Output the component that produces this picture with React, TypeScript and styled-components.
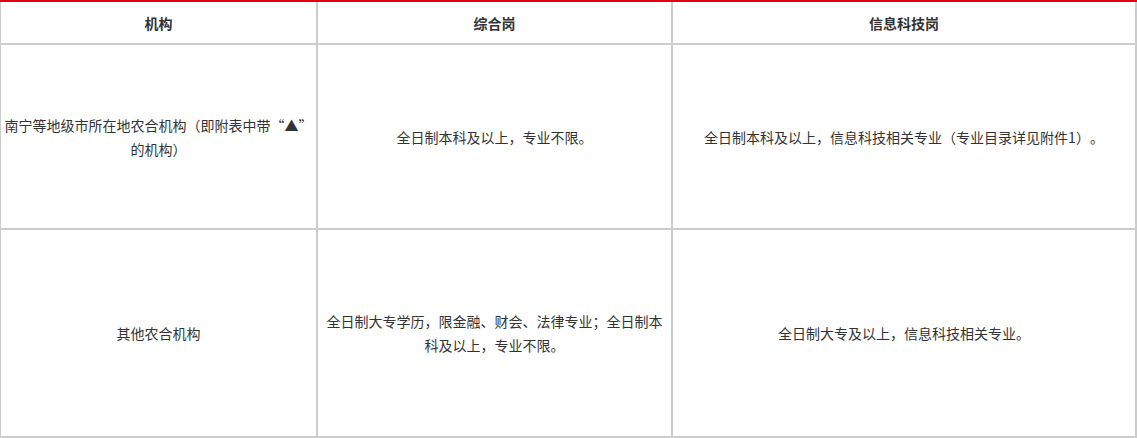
import styled, {createGlobalStyle} from "styled-components";
import {Fragment, ReactNode} from "react";

const GlobalStyle = createGlobalStyle`
    html, body {
        margin: 0;
        padding: 0;
        background: #fff;
    }
    body {
        font-family: "Noto Sans CJK SC", "Liberation Sans", sans-serif;
        color: #333;
    }
`;

const Table = styled.div`
    width: 1137px;
    box-sizing: border-box;
    border-top: 2px solid #e50012;
    display: grid;
    grid-template-columns: 315px 353px 462px;
    grid-template-rows: 41px 183px 206px;
    gap: 2px;
    padding: 0 2px 2px 1px;
    background: #ccc;
`;

const Cell = styled.div<{ $head?: boolean }>`
    background: #fff;
    display: flex;
    align-items: center;
    justify-content: center;
    text-align: center;
    padding: 0 2px;
    font-size: 14px;
    line-height: 24px;
    text-spacing-trim: space-all;
    font-weight: ${p => (p.$head ? "bold" : "normal")};
    color: #333;
`;

type Row = {
    id: string,
    org: ReactNode,
    general: string,
    tech: string
}

const rows: Row[] = [
    {
        id: "city",
        org: <>南宁等地级市所在地农合机构（即附表中带“▲”<wbr/>的机构）</>,
        general: "全日制本科及以上，专业不限。",
        tech: "全日制本科及以上，信息科技相关专业（专业目录详见附件1）。"
    },
    {
        id: "other",
        org: "其他农合机构",
        general: "全日制大专学历，限金融、财会、法律专业；全日制本科及以上，专业不限。",
        tech: "全日制大专及以上，信息科技相关专业。"
    }
];

export default function App() {
    return (
        <>
            <GlobalStyle/>
            <Table>
                <Cell $head>机构</Cell>
                <Cell $head>综合岗</Cell>
                <Cell $head>信息科技岗</Cell>
                {rows.map(r => (
                    <Fragment key={r.id}>
                        <Cell>{r.org}</Cell>
                        <Cell>{r.general}</Cell>
                        <Cell>{r.tech}</Cell>
                    </Fragment>
                ))}
            </Table>
        </>
    );
}
